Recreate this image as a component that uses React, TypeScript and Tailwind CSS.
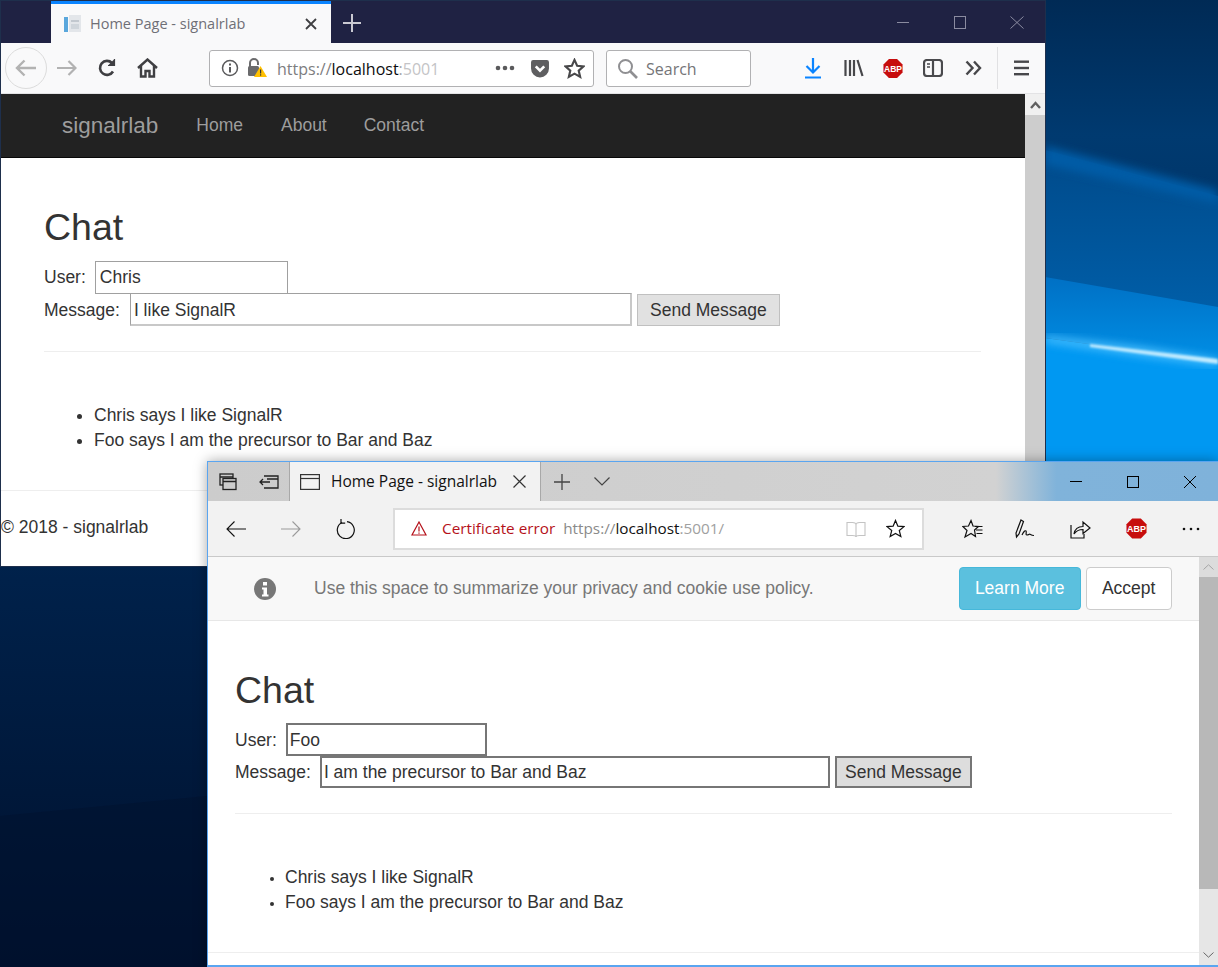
import type { ReactNode } from "react";

const web = "font-['Liberation_Sans',Arial,sans-serif]";
const ui = "font-['Open_Sans','Noto_Sans',sans-serif]";

function Wallpaper() {
  return (
    <svg className="absolute inset-0" width="1218" height="967" viewBox="0 0 1218 967" aria-hidden="true">
      <defs>
        <linearGradient id="sky" x1="0" y1="0" x2="0" y2="1">
          <stop offset="0" stopColor="#002a55" />
          <stop offset="0.14" stopColor="#003a70" />
          <stop offset="0.6" stopColor="#00214a" />
          <stop offset="0.82" stopColor="#00183a" />
          <stop offset="1" stopColor="#000f2c" />
        </linearGradient>
        <linearGradient id="upper" x1="0" y1="0" x2="0" y2="1">
          <stop offset="0" stopColor="#004a8a" />
          <stop offset="1" stopColor="#005ea8" />
        </linearGradient>
        <linearGradient id="mid" x1="0" y1="0" x2="0" y2="1">
          <stop offset="0" stopColor="#0070c4" />
          <stop offset="1" stopColor="#008fe6" />
        </linearGradient>
        <filter id="soft">
          <feGaussianBlur stdDeviation="4" />
        </filter>
        <filter id="thin">
          <feGaussianBlur stdDeviation="1" />
        </filter>
      </defs>
      <rect width="1218" height="967" fill="url(#sky)" />
      <polygon points="0,816 207,796 207,967 0,967" fill="#00122e" opacity="0.5" />
      <polygon points="1045,150 1218,196 1218,310 1045,280" fill="url(#upper)" />
      <polygon points="1045,146 1218,190 1218,204 1045,165" fill="#005ca6" filter="url(#soft)" />
      <polygon points="1045,277 1218,307 1218,362 1045,338" fill="url(#mid)" />
      <polygon points="1045,338 1218,362 1218,470 1045,470" fill="#0098f2" />
      <polygon points="1045,336 1140,347 1218,359 1218,366 1140,356 1045,342" fill="#4cc0ff" filter="url(#soft)" />
      <polygon points="1090,344 1218,359 1218,364 1090,347" fill="#bfeaff" filter="url(#thin)" />
    </svg>
  );
}

function AbpIcon({ size }: { size: number }) {
  return (
    <svg width={size} height={size} viewBox="0 0 22 22">
      <polygon points="6.5,0.5 15.5,0.5 21.5,6.5 21.5,15.5 15.5,21.5 6.5,21.5 0.5,15.5 0.5,6.5" fill="#c70d0d" />
      <text x="11" y="14.4" textAnchor="middle" fontSize="9.4" fontWeight="700" fill="#fff" fontFamily="Liberation Sans">
        ABP
      </text>
    </svg>
  );
}

function Slot({ className, children }: { className: string; children: ReactNode }) {
  return <div className={`flex shrink-0 items-center justify-center ${className}`}>{children}</div>;
}

function FirefoxChrome() {
  return (
    <>
      {/* title bar */}
      <div className="flex h-[42px] shrink-0 bg-[#1f2243]">
        <div className={`ml-[50px] flex h-[42px] w-[280px] items-center border-t-[3px] border-[#0a84ff] bg-[#f9f9fa] ${ui}`}>
          <svg className="ml-[12px]" width="20" height="20" viewBox="0 0 20 20">
            <rect x="1" y="3" width="4" height="15" fill="#5aa7dc" />
            <rect x="6" y="1" width="12" height="17" fill="#e3e6ea" />
            <rect x="8" y="6" width="8" height="2" fill="#c2c8cf" />
            <rect x="8" y="10" width="8" height="5" fill="#cfd5db" />
          </svg>
          <span className="ml-[7px] w-[183px] pt-[2px] text-[14.5px] leading-none text-[#6f6f76]">Home Page - signalrlab</span>
          <svg width="14" height="14" viewBox="0 0 14 14" stroke="#3f3f42" strokeWidth="1.8" className="ml-[31px]">
            <path d="M2 2 12 12M12 2 2 12" />
          </svg>
        </div>
        <svg className="ml-[12px] mt-[13px]" width="18" height="18" viewBox="0 0 18 18" stroke="#c9c9d2" strokeWidth="2">
          <path d="M9 0v18M0 9h18" />
        </svg>
        <div className="ml-auto flex items-center">
          <div className="h-px w-[12px] bg-[#8a8ba0]" />
          <div className="ml-[45px] h-[13px] w-[12px] border border-[#8a8ba0]" />
          <svg className="ml-[44px] mr-[21px]" width="14" height="13" viewBox="0 0 14 13" stroke="#8a8ba0">
            <path d="M0.5 0.5 13.5 12.5M13.5 0.5 0.5 12.5" />
          </svg>
        </div>
      </div>

      {/* toolbar */}
      <div className="flex h-[51px] shrink-0 items-center border-b border-[#e3e3e5] bg-[#f9f9fa]">
        <Slot className="ml-[4px] h-[42px] w-[42px] rounded-full border border-[#dcdcdc]">
          <svg width="22" height="18" viewBox="0 0 22 18" fill="none" stroke="#b2b2b2" strokeWidth="2.4">
            <path d="M21 9H2M9.5 1.5 2 9l7.5 7.5" />
          </svg>
        </Slot>
        <Slot className="ml-[9px] w-[22px]">
          <svg width="20" height="16" viewBox="0 0 20 16" fill="none" stroke="#b2b2b2" strokeWidth="2.2">
            <path d="M0 8h18M11.5 1 18.5 8l-7 7" />
          </svg>
        </Slot>
        <Slot className="ml-[19px] w-[20px]">
          <svg width="20" height="18" viewBox="0 0 20 18" fill="none" stroke="#3f3f42" strokeWidth="2.6">
            <path d="M16 12.5A7 7 0 1 1 15 4" />
            <path d="M17.5 0v6.5H11" fill="#3f3f42" strokeWidth="1.2" />
          </svg>
        </Slot>
        <Slot className="ml-[19px] w-[22px]">
          <svg width="21" height="20" viewBox="0 0 21 20" fill="none" stroke="#3f3f42" strokeWidth="2.4">
            <path d="M1 10 10.5 1.5 20 10M4 8v10.5h4.5V13h4v5.5H17V8" />
          </svg>
        </Slot>
        <div className="ml-[51px] flex h-[37px] w-[385px] items-center rounded-[3px] border border-[#b1b1b3] bg-white">
          <svg className="ml-[11px]" width="18" height="18" viewBox="0 0 18 18" fill="none" stroke="#5a5a5c" strokeWidth="1.5">
            <circle cx="9" cy="9" r="7.5" />
            <path d="M9 8v5.5M9 4.5v2" strokeWidth="2" />
          </svg>
          <svg className="ml-[8px]" width="20" height="20" viewBox="0 0 20 20">
            <path d="M3 9V5a4 4 0 0 1 8 0v2" fill="none" stroke="#6a6a6c" strokeWidth="2" />
            <rect x="1" y="8" width="11" height="10" rx="1.5" fill="#6a6a6c" />
            <polygon points="13.5,8 20,19 7,19" fill="#ffc000" />
            <rect x="13" y="11.5" width="1.2" height="4" fill="#333" />
            <rect x="13" y="16.3" width="1.2" height="1.3" fill="#333" />
          </svg>
          <span className={`ml-[10px] w-[180px] overflow-hidden pt-[2px] text-[16px] whitespace-nowrap text-[#7d7d80] ${ui}`}>
            https://<span className="text-[#0c0c0d]">localhost</span>
            <span className="text-[#a5a5a8]">:</span>
            <span className="text-[#c4c4c6]">5001</span>
          </span>
          <svg className="ml-[38px]" width="20" height="6" viewBox="0 0 20 6" fill="#5a5a5c">
            <circle cx="3" cy="3" r="2.3" />
            <circle cx="10" cy="3" r="2.3" />
            <circle cx="17" cy="3" r="2.3" />
          </svg>
          <svg className="ml-[15px]" width="20" height="19" viewBox="0 0 18 18">
            <path d="M2.5 1h13A2 2 0 0 1 17.5 3v6a8.5 8.5 0 0 1-17 0V3a2 2 0 0 1 2-2z" fill="#5e5e60" />
            <path d="M5 7l4 4 4-4" fill="none" stroke="#fff" strokeWidth="2.6" />
          </svg>
          <svg className="ml-[14px]" width="21" height="21" viewBox="0 0 20 20" fill="none" stroke="#48484a" strokeWidth="2">
            <polygon points="10,1.8 12.5,7.4 18.6,8 14,12 15.4,18 10,14.9 4.6,18 6,12 1.4,8 7.5,7.4" />
          </svg>
        </div>
        <div className="ml-[12px] flex h-[37px] w-[145px] items-center rounded-[3px] border border-[#b1b1b3] bg-white">
          <svg className="ml-[10px]" width="21" height="21" viewBox="0 0 21 21" fill="none" stroke="#8f8f92" strokeWidth="2">
            <circle cx="8.5" cy="8.5" r="6.5" />
            <path d="M13 13l7 7" strokeWidth="2.6" />
          </svg>
          <span className={`ml-[8px] pt-[2px] text-[16px] text-[#757578] ${ui}`}>Search</span>
        </div>
        <Slot className="ml-[52px] w-[20px]">
          <svg width="18" height="21" viewBox="0 0 18 21" fill="none" stroke="#0a84ff" strokeWidth="2.2">
            <path d="M9 0v14M2.5 8 9 14.5 15.5 8M1 19.5h16" />
          </svg>
        </Slot>
        <Slot className="ml-[21px] w-[20px]">
          <svg width="20" height="18" viewBox="0 0 20 18" fill="none" stroke="#47474a" strokeWidth="2.2">
            <path d="M1.5 1v16M6 1v16M10 1v16M13.5 1l5 16" />
          </svg>
        </Slot>
        <Slot className="ml-[19px] w-[20px]">
          <AbpIcon size={21} />
        </Slot>
        <Slot className="ml-[20px] w-[20px]">
          <svg width="20" height="18" viewBox="0 0 20 18" fill="none" stroke="#4a4a4d" strokeWidth="2.2">
            <rect x="1" y="1" width="18" height="16" rx="3" />
            <path d="M10 1v16" />
            <path d="M4 5h3M4 8h3" strokeWidth="1.5" />
          </svg>
        </Slot>
        <Slot className="ml-[20px] w-[20px]">
          <svg width="17" height="16" viewBox="0 0 17 16" fill="none" stroke="#47474a" strokeWidth="2.4">
            <path d="M1.5 1.5 7.5 8l-6 6.5M9 1.5 15 8l-6 6.5" />
          </svg>
        </Slot>
        <div className="ml-[14px] h-[42px] w-px bg-[#e1e1e3]" />
        <Slot className="ml-[15px] w-[16px]">
          <svg width="15" height="16" viewBox="0 0 15 16" fill="#47474a">
            <rect y="0.5" width="15" height="2.4" />
            <rect y="6.8" width="15" height="2.4" />
            <rect y="13" width="15" height="2.4" />
          </svg>
        </Slot>
      </div>
    </>
  );
}

function FirefoxPage() {
  return (
    <div className="flex min-h-0 flex-1">
      <div className={`min-w-0 flex-1 bg-white text-[17.5px] leading-[25px] text-[#333] ${web}`}>
        <nav className="flex h-[64px] items-center border-b border-[#080808] bg-[#222] pl-[61px] text-[#9d9d9d]">
          <span className="pr-[19px] text-[22.5px]">signalrlab</span>
          <span className="px-[19px]">Home</span>
          <span className="px-[19px]">About</span>
          <span className="px-[18px]">Contact</span>
        </nav>
        <div className="pl-[43px] pr-[44px]">
          <h2 className="mt-[49px] mb-[13px] text-[37.5px] leading-[41px]">Chat</h2>
          <div className="flex h-[32px] items-center">
            <label>User:</label>
            <input
              readOnly
              value="Chris"
              className="ml-[9px] h-[33px] w-[193px] border border-[#a0a0a0] px-[4px] outline-none"
            />
          </div>
          <div className="flex h-[33px] items-center">
            <label className="pt-[2px]">Message:</label>
            <input
              readOnly
              value="I like SignalR"
              className="ml-[10px] h-[33px] w-[502px] border border-[#a0a0a0] border-b-2 border-r-2 border-b-[#c8c8c8] border-r-[#c8c8c8] px-[3px] pt-[2px] outline-none"
            />
            <button className="ml-[5px] h-[32px] w-[143px] border border-[#c0c0c0] bg-[#e1e1e1] pt-[2px]">Send Message</button>
          </div>
          <hr className="mt-[25px] border-[#eee]" />
          <ul className="mt-[51px] list-disc pl-[50px]">
            <li>Chris says I like SignalR</li>
            <li>Foo says I am the precursor to Bar and Baz</li>
          </ul>
        </div>
        <hr className="mt-[37px] border-[#eee]" />
        <p className="mt-[24px]">© 2018 - signalrlab</p>
      </div>
      <div className="w-[20px] shrink-0 bg-[#cdcdcd]">
        <div className="flex h-[21px] items-center justify-center bg-[#f0f0f0]">
          <svg width="11" height="8" viewBox="0 0 11 8" fill="none" stroke="#606060" strokeWidth="2.4">
            <path d="M1 7l4.5-5L10 7" />
          </svg>
        </div>
      </div>
    </div>
  );
}

function EdgeChrome() {
  return (
    <>
      {/* title bar */}
      <div className="flex h-[39px] shrink-0 items-center bg-[linear-gradient(90deg,#cccccc_0%,#d2d2d2_78%,#80b3da_84%,#7fb2da_100%)]">
        <Slot className="ml-[10px] w-[20px]">
          <svg width="18" height="18" viewBox="0 0 18 18" fill="none" stroke="#222" strokeWidth="1.3">
            <rect x="1" y="1" width="13" height="11" />
            <rect x="4" y="5.5" width="13" height="11" fill="#ccc" />
            <path d="M1 4h13M4 8.5h13" />
          </svg>
        </Slot>
        <Slot className="ml-[20px] w-[22px]">
          <svg width="20" height="14" viewBox="0 0 20 14" fill="none" stroke="#222" strokeWidth="1.3">
            <path d="M5 1h14v12H5M8 4h11M0.8 7H11M4 4 1 7l3 3" />
          </svg>
        </Slot>
        <div className={`ml-[9px] flex h-[39px] w-[252px] items-center border-x border-[#a8a8a8] bg-[#f2f2f2] ${ui}`}>
          <svg className="ml-[10px]" width="20" height="16" viewBox="0 0 20 16" fill="none" stroke="#333" strokeWidth="1.2">
            <rect x="0.6" y="0.6" width="18.8" height="14.8" />
            <path d="M0.6 4.5h18.8" />
          </svg>
          <span className="ml-[11px] w-[170px] text-[15.5px] leading-none whitespace-nowrap text-[#111]">Home Page - signalrlab</span>
          <svg className="ml-[12px]" width="13" height="13" viewBox="0 0 13 13" stroke="#333" strokeWidth="1.2">
            <path d="M0.5 0.5 12.5 12.5M12.5 0.5 0.5 12.5" />
          </svg>
        </div>
        <svg className="ml-[13px]" width="16" height="16" viewBox="0 0 16 16" stroke="#444" strokeWidth="1.3">
          <path d="M8 0v16M0 8h16" />
        </svg>
        <svg className="ml-[24px]" width="16" height="9" viewBox="0 0 16 9" fill="none" stroke="#444" strokeWidth="1.2">
          <path d="M0.5 0.5 8 8l7.5-7.5" />
        </svg>
        <div className="ml-auto flex items-center">
          <div className="h-px w-[12px] bg-black" />
          <div className="ml-[45px] h-[12px] w-[12px] border border-black" />
          <svg className="ml-[45px] mr-[22px]" width="12" height="12" viewBox="0 0 12 12" stroke="#000">
            <path d="M0 0 12 12M12 0 0 12" />
          </svg>
        </div>
      </div>

      {/* toolbar */}
      <div className="flex h-[56px] shrink-0 items-center border-b border-[#c9c9c9] bg-[#f2f2f2]">
        <Slot className="ml-[18px] w-[20px]">
          <svg width="20" height="16" viewBox="0 0 20 16" fill="none" stroke="#111" strokeWidth="1.1">
            <path d="M20 8H1M8.5 0.5 1 8l7.5 7.5" />
          </svg>
        </Slot>
        <Slot className="ml-[35px] w-[20px]">
          <svg width="20" height="16" viewBox="0 0 20 16" fill="none" stroke="#9a9a9a" strokeWidth="1.1">
            <path d="M0 8h19M11.5 0.5 19 8l-7.5 7.5" />
          </svg>
        </Slot>
        <Slot className="ml-[35px] w-[20px]">
          <svg width="20" height="20" viewBox="0 0 20 20" fill="none" stroke="#111" strokeWidth="1.2">
            <path d="M6 3.5a8.5 8.5 0 1 0 5-.8" />
            <path d="M5 0v4.2h4.2" />
          </svg>
        </Slot>
        <div className="ml-[37px] flex h-[42px] w-[531px] items-center border-2 border-[#dcdcdc] bg-white">
          <svg className="ml-[16px]" width="16" height="15" viewBox="0 0 16 15" fill="none" stroke="#b5111a" strokeWidth="1.2">
            <path d="M8 1 15 14H1z" />
            <path d="M8 5.5v5M8 11.5v1.3" />
          </svg>
          <span className={`ml-[15px] text-[15.3px] whitespace-nowrap text-[#b5111a] ${ui}`}>Certificate error</span>
          <span className={`ml-[8px] w-[263px] text-[15.3px] whitespace-nowrap text-[#8a8a8a] ${ui}`}>
            https://<span className="text-[#111]">localhost</span>
            <span className="text-[#a0a0a0]">:5001/</span>
          </span>
          <svg className="ml-[20px]" width="20" height="18" viewBox="0 0 20 18" fill="none" stroke="#c4c4c4" strokeWidth="1.1">
            <path d="M1 2.5h5.5Q10 2.5 10 5v12Q10 15.5 6.5 15.5H1zM19 2.5h-5.5Q10 2.5 10 5v12Q10 15.5 13.5 15.5H19z" />
          </svg>
          <svg className="ml-[20px]" width="19" height="19" viewBox="0 0 20 20" fill="none" stroke="#111" strokeWidth="1.3">
            <polygon points="10,1.5 12.5,7.5 19,8 14,12.2 15.6,18.5 10,15.2 4.4,18.5 6,12.2 1,8 7.5,7.5" />
          </svg>
        </div>
        <Slot className="ml-[37px] w-[22px]">
          <svg width="21" height="20" viewBox="0 0 21 20" fill="none" stroke="#111" strokeWidth="1.2">
            <polygon points="9,1.5 11,7 16.5,7.5 12.5,11 13.5,17.5 9,14.5 3,18 5,11.5 0.8,7.5 6.5,7" />
            <path d="M13 7.5h7.5M14 11h6.5M14.5 14.5h6" />
          </svg>
        </Slot>
        <Slot className="ml-[31px] w-[22px]">
          <svg width="20" height="20" viewBox="0 0 20 20" fill="none" stroke="#111" strokeWidth="1.2">
            <path d="M6 1 8.5 2.5 4 15l-2.5 3-.5-4z" />
            <path d="M7 16c1.5-3 3-5 4-4s-1 4 1 4 2-1.5 3.5-.5 2 1 3.5 1" />
          </svg>
        </Slot>
        <Slot className="ml-[33px] w-[22px]">
          <svg width="21" height="20" viewBox="0 0 21 20" fill="none" stroke="#111" strokeWidth="1.2">
            <path d="M1 6v13h13v-4" />
            <path d="M4 15C5 9 9 7.5 13 7.5V3l7 6-7 5.5V10.5C9 10.5 6 12 4 15z" />
          </svg>
        </Slot>
        <Slot className="ml-[34px] w-[22px]">
          <AbpIcon size={21} />
        </Slot>
        <Slot className="ml-[33px] w-[22px]">
          <svg width="18" height="4" viewBox="0 0 18 4" fill="#111">
            <circle cx="2" cy="2" r="1.3" />
            <circle cx="9" cy="2" r="1.3" />
            <circle cx="16" cy="2" r="1.3" />
          </svg>
        </Slot>
      </div>
    </>
  );
}

function EdgePage() {
  return (
    <div className="flex min-h-0 flex-1">
      <div className={`min-w-0 flex-1 bg-white text-[17.5px] leading-[25px] text-[#333] ${web}`}>
        {/* cookie notice */}
        <div className="flex h-[64px] items-center border-b border-[#e7e7e7] bg-[#f8f8f8]">
          <svg className="ml-[46px]" width="22" height="22" viewBox="0 0 22 22">
            <circle cx="11" cy="11" r="11" fill="#777" />
            <rect x="9" y="4" width="4" height="3.5" fill="#fff" />
            <path d="M8 9.5h5v7h1.5v2h-6.5v-2H9.5v-5H8z" fill="#fff" />
          </svg>
          <span className="ml-[38px] text-[#777]">Use this space to summarize your privacy and cookie use policy.</span>
          <button className="ml-[145px] h-[43px] w-[122px] rounded-[4px] border border-[#46b8da] bg-[#5bc0de] text-white">Learn More</button>
          <button className="ml-[5px] h-[43px] w-[86px] rounded-[4px] border border-[#ccc] bg-white">Accept</button>
        </div>
        <div className="px-[27px]">
          <h2 className="mt-[49px] mb-[12px] text-[37.5px] leading-[41px]">Chat</h2>
          <div className="flex h-[33px] items-center">
            <label className="pt-[2px]">User:</label>
            <input
              readOnly
              value="Foo"
              className="ml-[9px] h-[33px] w-[201px] border-2 border-[#767676] px-[2px] pt-[2px] outline-none"
            />
          </div>
          <div className="flex h-[32px] items-center">
            <label>Message:</label>
            <input
              readOnly
              value="I am the precursor to Bar and Baz"
              className="ml-[9px] h-[32px] w-[510px] border-2 border-[#767676] px-[2px] outline-none"
            />
            <button className="ml-[5px] h-[32px] w-[137px] border-2 border-[#767676] bg-[#dddddd]">Send Message</button>
          </div>
          <hr className="mt-[25px] border-[#eee]" />
          <ul className="mt-[51px] list-disc pl-[50px] marker:text-[14px]">
            <li>Chris says I like SignalR</li>
            <li>Foo says I am the precursor to Bar and Baz</li>
          </ul>
        </div>
        <hr className="mt-[37px] border-[#eee]" />
      </div>
      <div className="flex w-[19px] shrink-0 flex-col bg-[#e6e6e6]">
        <div className="flex h-[20px] items-center justify-center bg-[#dcdcdc]">
          <svg width="11" height="6" viewBox="0 0 11 6" fill="none" stroke="#a5a5a5">
            <path d="M0.5 5.5 5.5 0.8l5 4.7" />
          </svg>
        </div>
        <div className="h-[312px] bg-[#b8b8b8]" />
        <div className="mt-auto flex h-[20px] items-center justify-center">
          <svg width="11" height="6" viewBox="0 0 11 6" fill="none" stroke="#666">
            <path d="M0.5 0.5 5.5 5.2l5-4.7" />
          </svg>
        </div>
      </div>
    </div>
  );
}

export default function App() {
  return (
    <div className="relative h-[967px] w-[1218px] overflow-hidden">
      <Wallpaper />

      {/* Firefox */}
      <div className="absolute left-0 top-0 flex h-[567px] w-[1046px] flex-col border border-[#1e2f4c] bg-white">
        <FirefoxChrome />
        <FirefoxPage />
      </div>

      {/* Edge */}
      <div className="absolute left-[207px] top-[461px] flex h-[506px] w-[1011px] flex-col border border-r-0 border-b-2 border-[#5aa5f0] bg-white shadow-[0_0_12px_rgba(0,0,0,0.35)]">
        <EdgeChrome />
        <EdgePage />
      </div>
    </div>
  );
}
